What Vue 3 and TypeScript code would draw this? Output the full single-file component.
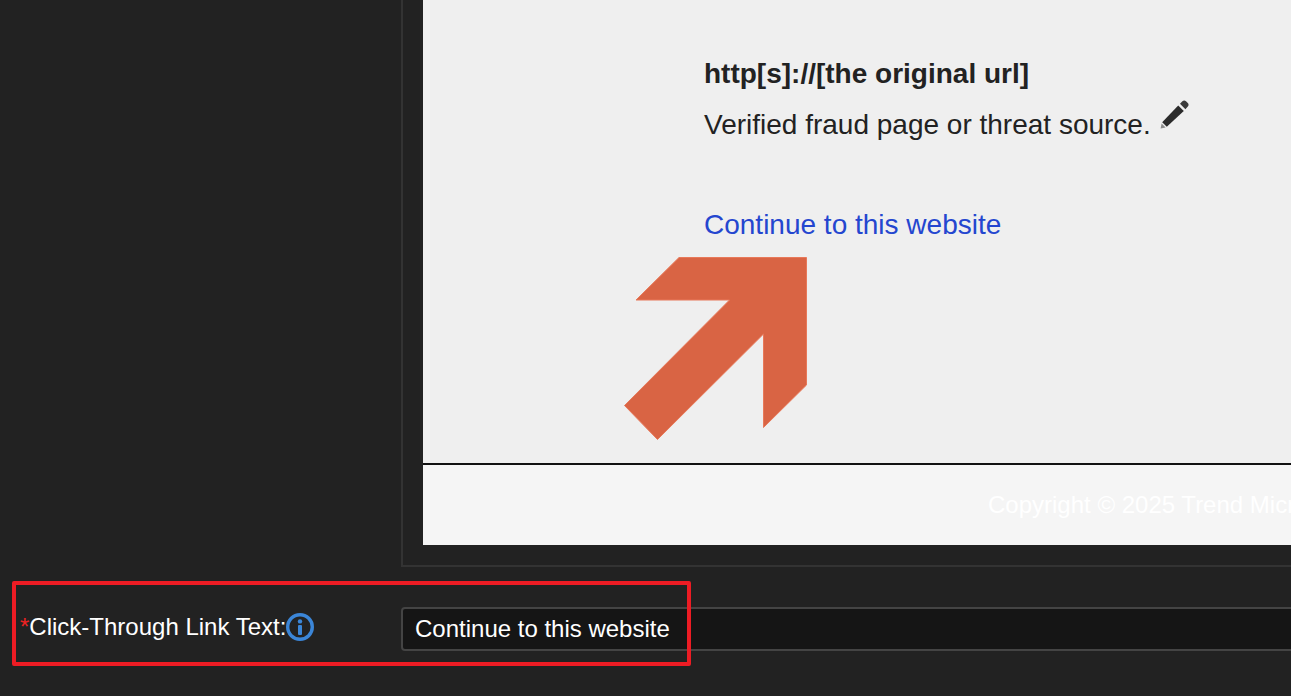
<script setup lang="ts">
const linkText = 'Continue to this website'
const arrowPoints = '679,257.5 806.5,257.5 806.5,385 763.5,427.5 763.5,334 657.5,439.5 624.5,405.5 729.5,300 636,300'
</script>

<template>
  <div class="screen">
    <div class="preview">
      <div class="sheet">
        <main class="sheet-main">
          <h2 class="url">http[s]://[the original url]</h2>
          <p class="reason">
            Verified fraud page or threat source.
            <svg class="pencil" width="32" height="32" viewBox="0 0 32 32">
              <path d="M2.6 30.4 L3.6 25.4 L7.6 29.4 Z" fill="#8a8a8a" />
              <path d="M4.2 24.2 L20.2 7.4 L25.8 13 L8.8 28.8 Z" fill="#2b2b2b" />
              <path d="M22 5.8 L24.4 3.2 C25.4 2.2 27 2.2 28 3.2 L29.8 5 C30.8 6 30.8 7.6 29.8 8.6 L27.4 11.2 Z" fill="#3a3a3a" />
            </svg>
          </p>
          <a class="continue">{{ linkText }}</a>
        </main>
        <footer class="sheet-footer">Copyright © 2025 Trend Micro Incorporated. All rights reserved.</footer>
      </div>
    </div>

    <div class="field">
      <label class="field-label">
        <span class="required">*</span>Click-Through Link Text:<svg class="info" width="28" height="28" viewBox="0 0 28 28">
          <circle cx="14" cy="14" r="12.3" fill="none" stroke="#3b86d8" stroke-width="3.4" />
          <circle cx="14" cy="8.4" r="2.2" fill="#3b86d8" />
          <rect x="12" y="12" width="4" height="10" rx="1" fill="#3b86d8" />
        </svg>
      </label>
      <input class="field-input" type="text" :value="linkText" />
    </div>

    <!-- annotation layers on top of the screenshot -->
    <svg class="arrow" width="1291" height="696" viewBox="0 0 1291 696">
      <polygon :points="arrowPoints" fill="#d96444" stroke="#e8795a" stroke-width="1" />
    </svg>
    <div class="highlight"></div>
  </div>
</template>

<style>
html,
body {
  margin: 0;
  background: #222;
  overflow: hidden;
}
</style>

<style scoped>
.screen {
  position: relative;
  width: 1291px;
  height: 696px;
  overflow: hidden;
  background: #222;
  font-family: "Liberation Sans", Arial, sans-serif;
  color: #fff;
}

.preview {
  box-sizing: border-box;
  width: 1400px;
  margin-left: 401px;
  padding: 0 0 20px 20px;
  border-left: 2px solid #333;
  border-bottom: 2px solid #333;
}

.sheet {
  width: 1300px;
}

.sheet-main {
  box-sizing: border-box;
  height: 465px;
  padding: 56px 0 0 281px;
  background: #efefef;
  border-bottom: 2px solid #111;
  color: #222;
  font-size: 28px;
}

.url {
  margin: 0;
  font-size: 28px;
  line-height: 36px;
  font-weight: 700;
}

.reason {
  margin: 6px 0 0;
  line-height: 36px;
  white-space: nowrap;
}

.pencil {
  vertical-align: 4px;
  margin-left: -1px;
}

.continue {
  display: block;
  margin-top: 64px;
  line-height: 36px;
  color: #2446cf;
}

.sheet-footer {
  box-sizing: border-box;
  height: 80px;
  padding: 26px 0 0 565px;
  background: #f5f5f5;
  color: #fff;
  font-size: 24px;
  line-height: 28px;
  white-space: nowrap;
}

.field {
  display: flex;
  align-items: center;
  margin-top: 40px;
}

.field-label {
  flex: none;
  box-sizing: border-box;
  display: flex;
  align-items: center;
  width: 401px;
  padding: 0 0 4px 20px;
  font-size: 24px;
  white-space: nowrap;
}

.required {
  color: #ee2222;
}

.info {
  flex: none;
}

.field-input {
  flex: none;
  box-sizing: border-box;
  width: 1000px;
  height: 44px;
  padding: 0 12px;
  background: #151515;
  border: 2px solid #444;
  border-radius: 4px;
  color: #fff;
  font-family: inherit;
  font-size: 24px;
  outline: none;
}

.arrow {
  position: absolute;
  left: 0;
  top: 0;
  pointer-events: none;
}

.highlight {
  position: absolute;
  left: 12px;
  top: 581px;
  width: 679px;
  height: 85px;
  box-sizing: border-box;
  border: 4px solid #ed1c24;
  border-radius: 2px;
  pointer-events: none;
}
</style>
